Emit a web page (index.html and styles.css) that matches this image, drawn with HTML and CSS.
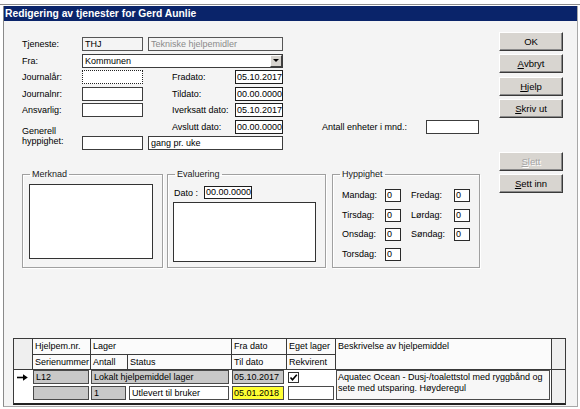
FILE: index.html
```html
<!DOCTYPE html>
<html lang="no">
<head>
<meta charset="utf-8">
<title>Redigering av tjenester</title>
<link rel="stylesheet" href="styles.css">
</head>
<body>
<div class="screen">
  <div class="topstrip"></div>
  <div class="window">
    <div class="titlebar">Redigering av tjenester for Gerd Aunlie</div>
    <div class="main">
      <div class="left">
        <div class="form">
          <span class="lbl r1 cA">Tjeneste:</span>
          <div class="fld ro r1 cB">THJ</div>
          <div class="fld ro dim r1 cCE">Tekniske hjelpemidler</div>

          <span class="lbl r2 cA">Fra:</span>
          <div class="fld sel r2 cBE"><span class="seltext">Kommunen</span><span class="dropbtn"><span class="tri"></span></span></div>

          <span class="lbl r3 cA">Journalår:</span>
          <div class="fld focus r3 cB"></div>
          <span class="lbl r3 cD">Fradato:</span>
          <div class="fld date r3 cE">05.10.2017</div>

          <span class="lbl r4 cA">Journalnr:</span>
          <div class="fld r4 cB"></div>
          <span class="lbl r4 cD">Tildato:</span>
          <div class="fld date r4 cE">00.00.0000</div>

          <span class="lbl r5 cA">Ansvarlig:</span>
          <div class="fld r5 cB"></div>
          <span class="lbl r5 cD">Iverksatt dato:</span>
          <div class="fld date r5 cE">05.10.2017</div>

          <span class="lbl two r67 cA">Generell<br>hyppighet:</span>
          <span class="lbl r6 cD">Avslutt dato:</span>
          <div class="fld date r6 cE">00.00.0000</div>
          <span class="lbl r6 cG">Antall enheter i mnd.:</span>
          <div class="fld r6 cH"></div>

          <div class="fld r7 cB"></div>
          <div class="fld r7 cCE">gang pr. uke</div>
        </div>

        <div class="groups">
          <fieldset class="grp g-merknad">
            <legend>Merknad</legend>
            <div class="memo memo-merknad"></div>
          </fieldset>
          <fieldset class="grp g-eval">
            <legend>Evaluering</legend>
            <div class="datorow">
              <span class="datolbl">Dato :</span>
              <div class="fld small date">00.00.0000</div>
            </div>
            <div class="memo memo-eval"></div>
          </fieldset>
          <fieldset class="grp g-hypp">
            <legend>Hyppighet</legend>
            <div class="days">
              <span class="lbl">Mandag:</span><div class="fld day">0</div><span></span>
              <span class="lbl">Fredag:</span><div class="fld day">0</div>
              <span class="lbl">Tirsdag:</span><div class="fld day">0</div><span></span>
              <span class="lbl">Lørdag:</span><div class="fld day">0</div>
              <span class="lbl">Onsdag:</span><div class="fld day">0</div><span></span>
              <span class="lbl">Søndag:</span><div class="fld day">0</div>
              <span class="lbl">Torsdag:</span><div class="fld day">0</div>
            </div>
          </fieldset>
        </div>
      </div>

      <div class="buttons">
        <div class="btn">OK</div>
        <div class="btn"><u>A</u>vbryt</div>
        <div class="btn"><u>H</u>jelp</div>
        <div class="btn"><u>S</u>kriv ut</div>
        <div class="btn disabled"><u>S</u>lett</div>
        <div class="btn"><u>S</u>ett inn</div>
      </div>
    </div>

    <div class="table">
      <div class="thead">
        <div class="th ind"></div>
        <div class="th">Hjelpem.nr.</div>
        <div class="th span34">Lager</div>
        <div class="th">Fra dato</div>
        <div class="th">Eget lager</div>
        <div class="th desc-h">Beskrivelse av hjelpemiddel</div>
        <div class="th scroll-h"></div>
        <div class="th">Serienummer</div>
        <div class="th">Antall</div>
        <div class="th">Status</div>
        <div class="th">Til dato</div>
        <div class="th">Rekvirent</div>
      </div>
      <div class="tbody">
        <div class="ind-cell"><svg width="11" height="7" viewBox="0 0 11 7"><path d="M0 3.5H7.5" stroke="#000" stroke-width="1.6"/><path d="M6 0.3L10.8 3.5L6 6.7Z" fill="#000"/></svg></div>
        <div class="cell gray c2 row1">L12</div>
        <div class="cell gray c34 row1">Lokalt hjelpemiddel lager</div>
        <div class="cell gray c5 row1">05.10.2017</div>
        <div class="chk-cell row1"><span class="chk"><svg width="9" height="9" viewBox="0 0 9 9"><path d="M1.5 4.5L3.5 6.8L7.8 1.8" fill="none" stroke="#000" stroke-width="1.6"/></svg></span></div>
        <div class="cell descbox">Aquatec Ocean - Dusj-/toalettstol med ryggbånd og<br>sete med utsparing. Høyderegul</div>
        <div class="scroll-b"></div>

        <div class="cell gray c2 row3"></div>
        <div class="cell gray c3 row3">1</div>
        <div class="cell c4 row3">Utlevert til bruker</div>
        <div class="cell yellow c5 row3">05.01.2018</div>
        <div class="cell c6 row3"></div>
      </div>
    </div>
  </div>
</div>
</body>
</html>
```

FILE: styles.css
```css
* { box-sizing: border-box; margin: 0; padding: 0; }

body {
  margin: 0;
  background: #fff;
  font-family: "Liberation Sans", Arial, sans-serif;
  font-size: 9px;
  color: #000;
}

.screen {
  width: 580px;
  height: 409px;
  overflow: hidden;
  background: #fff;
}

.topstrip {
  height: 5px;
  border-bottom: 1px solid #8c8c8c;
  margin-bottom: 1px;
  background: #fff;
}

.window {
  margin-left: 3px;
  width: 575px;
  height: 401px;
  background: #f4f4f4;
  border-left: 1px solid #8a8a8a;
  border-right: 1px solid #a8a8a8;
  border-bottom: 1px solid #a8a8a8;
}

.titlebar {
  height: 15px;
  line-height: 15px;
  background: #0a246a;
  color: #fff;
  font-weight: bold;
  font-size: 10.3px;
  padding-left: 1px;
  white-space: nowrap;
}

.main {
  display: flex;
  align-items: flex-start;
}

.left {
  margin-left: 18px;
  width: 458px;
  padding-top: 16px;
}

/* ---------- form grid ---------- */
.form {
  display: grid;
  grid-template-columns: 60px 61px 5px 24px 63px 48px 39px 104px 53px;
  grid-template-rows: repeat(7, 14px);
  row-gap: 2.5px;
  align-items: center;
}

.r1 { grid-row: 1; }
.r2 { grid-row: 2; }
.r3 { grid-row: 3; }
.r4 { grid-row: 4; }
.r5 { grid-row: 5; }
.r6 { grid-row: 6; }
.r7 { grid-row: 7; }
.r67 { grid-row: 6 / 8; }

.cA { grid-column: 1; }
.cB { grid-column: 2 / 3; }
.cBE { grid-column: 2 / 7; }
.cCE { grid-column: 4 / 7; }
.cD { grid-column: 5 / 6; }
.cE { grid-column: 6 / 7; }
.cG { grid-column: 8 / 9; }
.cH { grid-column: 9 / 10; }

.lbl {
  line-height: 14px;
  white-space: nowrap;
}

.lbl.two {
  align-self: start;
  margin-top: 6px;
  line-height: 10px;
}

.fld {
  height: 14px;
  border: 1px solid #3c3c3c;
  background: #fff;
  line-height: 12px;
  padding-left: 2px;
  white-space: nowrap;
  overflow: hidden;
}

.fld.ro { background: #f4f4f4; border-color: #555; }
.fld.dim { color: #8a8a8a; }
.fld.focus { border: 1px dotted #222; }
.fld.date {
  border-color: #1e1e1e;
  padding-left: 1px;
}

.fld.sel {
  display: flex;
  align-items: center;
  justify-content: space-between;
  padding-right: 0;
}

.dropbtn {
  width: 12px;
  height: 12px;
  background: #d6d3ce;
  border: 1px solid;
  border-color: #fff #404040 #404040 #fff;
  display: flex;
  align-items: center;
  justify-content: center;
}

.tri {
  width: 0;
  height: 0;
  border-left: 3px solid transparent;
  border-right: 3px solid transparent;
  border-top: 3px solid #000;
}

/* ---------- group boxes ---------- */
.groups {
  display: flex;
  margin-top: 18px;
}

.grp {
  height: 100px;
  border: 1px solid #a0a0a0;
  box-shadow: inset 1px 1px 0 #fff, 1px 1px 0 #fff;
  padding: 0;
  min-width: 0;
}

.grp legend {
  margin-left: 7px;
  padding: 0 2px;
  line-height: 12px;
  font-size: 9px;
  color: #1a1a1a;
}

.g-merknad { width: 141px; padding-top: 4px; }
.g-eval { width: 159px; margin-left: 4px; padding-top: 6px; }
.g-hypp { width: 148px; margin-left: 6px; padding-top: 9px; }

.memo {
  background: #fff;
  border: 1px solid #333;
}

.memo-merknad {
  margin-left: 6px;
  width: 124px;
  height: 75px;
}

.datorow {
  display: flex;
  align-items: center;
  height: 13px;
  margin-left: 6px;
}

.datolbl { width: 30px; white-space: nowrap; }

.fld.small {
  height: 13px;
  width: 48px;
  line-height: 11px;
}

.memo-eval {
  margin-left: 5px;
  margin-top: 3px;
  width: 143px;
  height: 60px;
}

.days {
  display: grid;
  grid-template-columns: 43px 16px 10px 43px 16px;
  grid-auto-rows: 13px;
  row-gap: 6.7px;
  margin-left: 9px;
  align-items: center;
}

.days .lbl { line-height: 13px; }

.fld.day {
  height: 13px;
  line-height: 11px;
  padding-left: 1px;
  border-color: #2a2a2a;
}

/* ---------- buttons ---------- */
.buttons {
  margin-left: 19px;
  width: 64px;
  padding-top: 11px;
  display: flex;
  flex-direction: column;
  gap: 3.3px;
}

.btn {
  height: 19px;
  background: #d8d5d0;
  border: 1px solid;
  border-color: #fff #3a3a3a #3a3a3a #fff;
  box-shadow: inset -1px -1px 0 #8a8a8a;
  display: flex;
  align-items: center;
  justify-content: center;
  white-space: nowrap;
  font-size: 9.5px;
}

.btn.disabled {
  color: #a4a4a4;
  text-shadow: 1px 1px 0 #fff;
  margin-top: 31px;
}

/* ---------- table ---------- */
.table {
  margin-left: 9px;
  margin-top: 70px;
  width: 553px;
}

.thead {
  display: grid;
  grid-template-columns: 18px 57px 36px 103px 54px 48px 215px 13px;
  grid-template-rows: 15px 14px;
  gap: 1px;
  background: #3a3a3a;
  border: 1px solid #3a3a3a;
}

.th {
  background: #fbfbfb;
  padding-left: 2px;
  line-height: 14px;
  white-space: nowrap;
  overflow: hidden;
}

.th.ind { grid-row: 1 / 3; grid-column: 1; background: #efefef; }
.th.span34 { grid-column: 3 / 5; }
.th.desc-h { grid-row: 1 / 3; grid-column: 7; }
.th.scroll-h { grid-row: 1 / 3; grid-column: 8; background: #efefef; }

.tbody {
  display: grid;
  grid-template-columns: 18px 57px 36px 103px 54px 48px 215px 13px;
  grid-template-rows: 14px 2px 14px 3px;
  column-gap: 1px;
  background: #fff;
  border-left: 1px solid #3a3a3a;
  border-right: 1px solid #3a3a3a;
  border-bottom: 2px solid #222;
}

.ind-cell {
  grid-column: 1;
  grid-row: 1;
  display: flex;
  align-items: center;
  padding-left: 3px;
}

.cell {
  border: 1px solid #4a4a4a;
  line-height: 12px;
  padding-left: 2px;
  white-space: nowrap;
  overflow: hidden;
  background: #fff;
}

.cell.gray { background: #c8c8c8; }
.cell.yellow { background: #ffff33; padding-left: 1px; }

.row1 { grid-row: 1; }
.row3 { grid-row: 3; }

.c2 { grid-column: 2; margin-right: 1px; }
.c34 { grid-column: 3 / 5; margin-right: 2px; }
.c3 { grid-column: 3; margin-right: 1px; }
.c4 { grid-column: 4; margin-left: 1px; margin-right: 2px; }
.c5 { grid-column: 5; margin-right: 2px; padding-left: 1px; }
.c6 { grid-column: 6; margin-left: 1px; margin-right: 1px; }

.chk-cell {
  grid-column: 6;
  display: flex;
  align-items: center;
  padding-left: 1px;
}

.chk {
  width: 11px;
  height: 11px;
  border: 1px solid #333;
  background: #fff;
  display: flex;
  align-items: center;
  justify-content: center;
}

.descbox {
  grid-column: 7;
  grid-row: 1 / 4;
  margin-right: 1px;
  line-height: 11px;
  padding: 1px 0 0 1px;
  background: #f7f7f7;
}

.scroll-b {
  grid-column: 8;
  grid-row: 1 / 5;
  margin-left: -1px;
  border-left: 1px solid #3a3a3a;
  background: #efefef;
}
```
